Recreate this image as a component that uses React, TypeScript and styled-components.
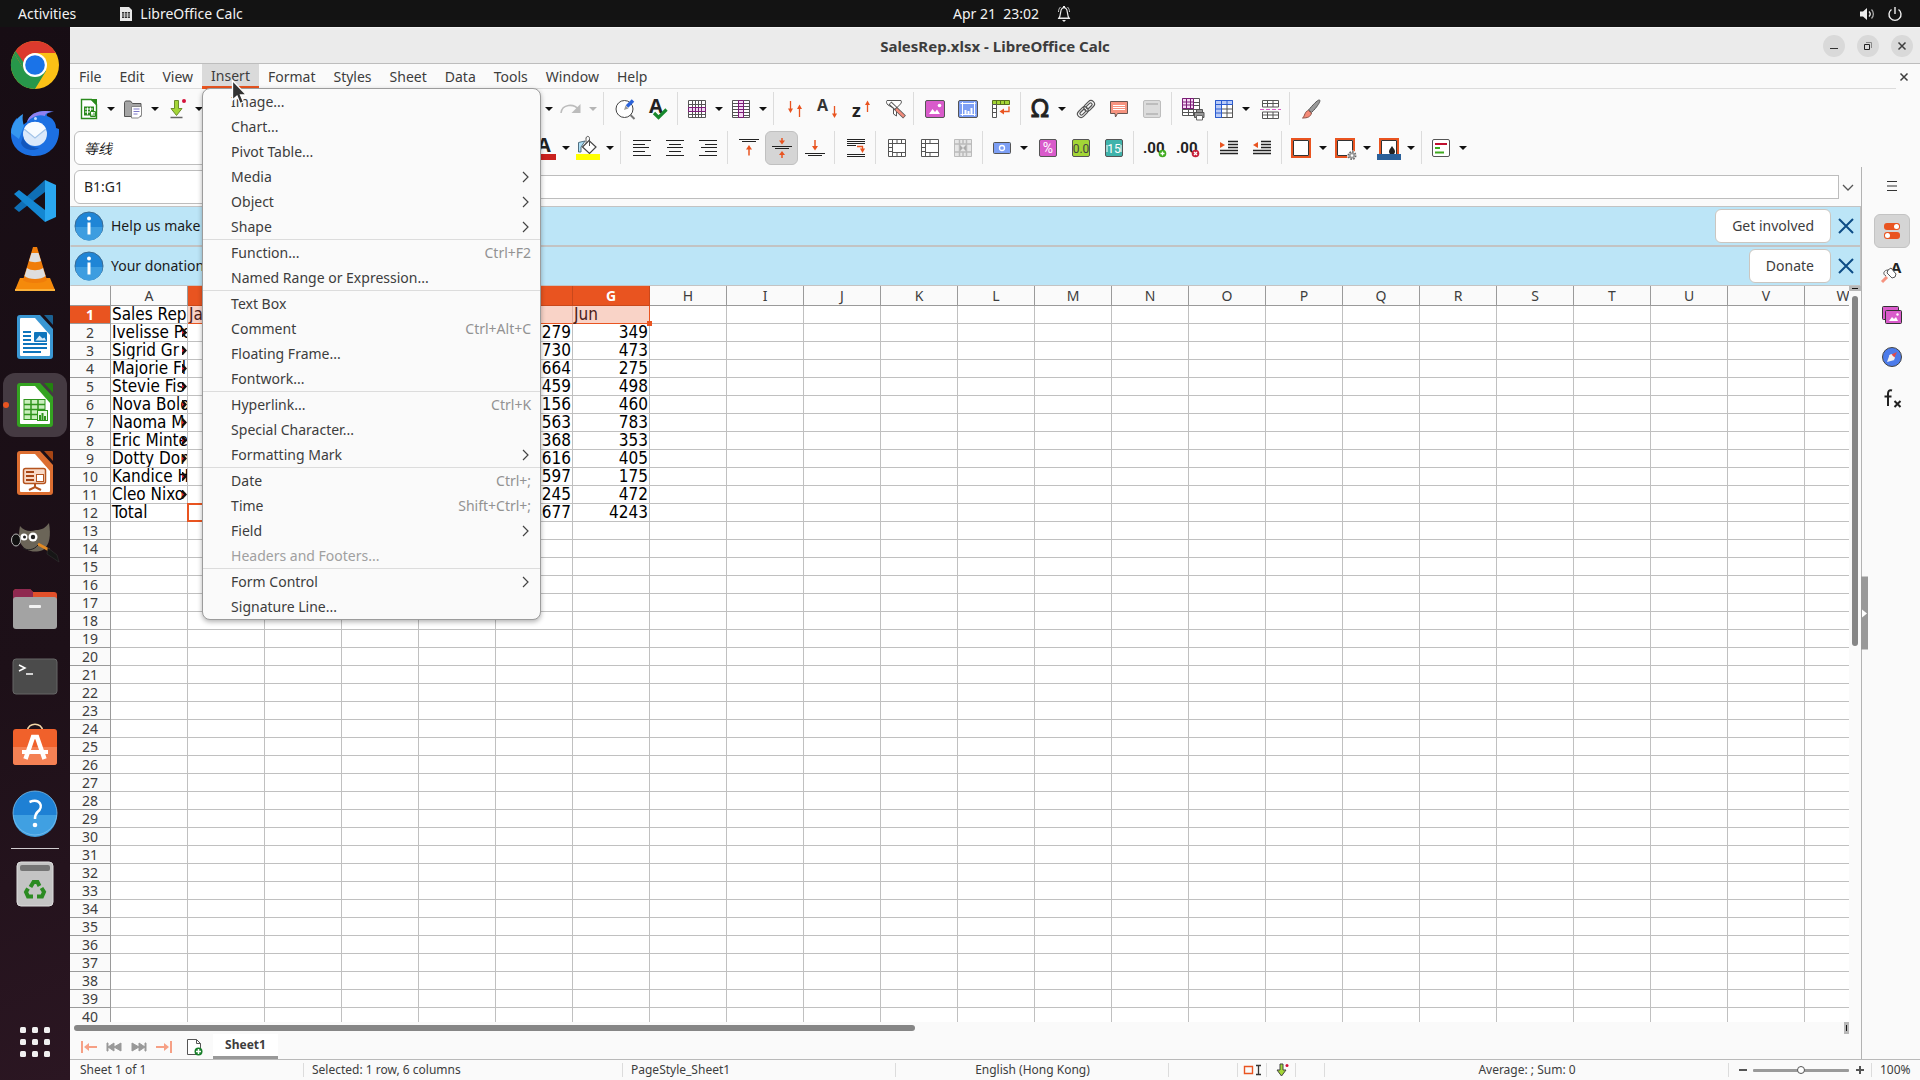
import React from 'react';
import styled, { createGlobalStyle, css } from 'styled-components';

const UI = '"Noto Sans", "Noto Sans CJK SC", sans-serif';
const CELL = '"DejaVu Sans Condensed", "DejaVu Sans", sans-serif';
const C = {
  accent: '#e95420',
  text: '#3d3d3d',
  muted: '#929292',
  bg: '#fafafa',
  line: '#c0c0c0',
  soft: '#dcdcdc',
  head: '#9a9a9a',
};

const Global = createGlobalStyle`
  * { box-sizing: border-box; }
  body { margin: 0; font: 14px/20px ${UI}; color: ${C.text}; background: ${C.bg}; overflow: hidden; }
  button, input { font: inherit; color: inherit; padding: 0; margin: 0; border: 0; background: none; }
`;

/* ---------- shell ---------- */
const Page = styled.div`display: flex; flex-direction: column; height: 100vh;`;
const Body = styled.div`display: flex; flex: 1; min-height: 0;`;
const Win = styled.main`display: flex; flex-direction: column; flex: 1; min-width: 0; background: ${C.bg};`;

const TopBar = styled.header`
  display: flex; align-items: center; height: 27px; flex: none;
  background: #131313; color: #f2f2f2; line-height: 27px;
`;
const TopLeft = styled.div`display: flex; flex: 1 1 0; align-items: center; padding: 0 18px; gap: 43px;`;
const TopRight = styled.div`display: flex; flex: 1 1 0; align-items: center; padding: 0 17px; gap: 12px;`;
const TopApp = styled.button`display: flex; align-items: center; gap: 7px;`;
const Clock = styled.time`margin-left: 70px; white-space: pre;`;
const Push = styled.span`flex: 1;`;

const Dock = styled.nav`
  display: flex; flex-direction: column; align-items: center; gap: 4px; flex: none;
  width: 70px; padding: 6px 0; background: linear-gradient(160deg, #170d14 0%, #1d1018 60%, #2b1622 100%);
`;
const DockItem = styled.button<{ $active?: boolean }>`
  position: relative; display: grid; place-items: center; width: 64px; height: 64px; flex: none; border-radius: 12px;
  background: ${p => (p.$active ? '#453a42' : 'transparent')};
  ${p => p.$active && css`&::before { content: ''; position: absolute; left: 0; top: 29px; width: 6px; height: 6px; border-radius: 50%; background: ${C.accent}; }`}
`;
const DockLine = styled.hr`width: 48px; height: 1px; margin: -1px 0; border: 0; flex: none; background: #d0cccf;`;

const TitleBar = styled.div`
  display: grid; grid-template-columns: 1fr auto 1fr; align-items: center; height: 37px; flex: none;
  background: #ebebeb; border-bottom: 1px solid #bdbdbd; border-top: 1px solid #f6f6f6;
`;
const Title = styled.h1`grid-column: 2; margin: 0; font-size: 15px; line-height: 20px; font-weight: 700;`;
const WinButtons = styled.div`display: flex; justify-content: flex-end; gap: 12px; padding-right: 7px;`;
const WinButton = styled.button`display: grid; place-items: center; width: 22px; height: 22px; border-radius: 50%; background: #d9d9d9;`;

const MenuRow = styled.div`display: flex; flex: none; height: 25px;`;
const MenuBar = styled.nav`display: flex; flex: 1; border-bottom: 1px solid ${C.soft};`;
const MenuHolder = styled.div`position: relative; display: flex;`;
const MenuTitle = styled.button<{ $open?: boolean }>`
  height: 25px; padding: 0 9px; line-height: 24px;
  ${p => p.$open && css`background: #dadada; border-bottom: 3px solid ${C.accent};`}
`;
const DocClose = styled.button`display: grid; place-items: center; width: 24px; padding-right: 8px;`;

const Menu = styled.ul`
  position: absolute; z-index: 5; left: 0; top: 24px; width: 339px; margin: 0; padding: 0; list-style: none;
  background: ${C.bg}; border: 1px solid #9c9c9c; border-radius: 8px; box-shadow: 0 2px 5px rgba(0, 0, 0, 0.3);
`;
const MenuLine = styled.li`height: 1px; background: ${C.soft};`;
const MenuItem = styled.button`
  display: flex; align-items: center; justify-content: space-between; width: 100%; height: 25px; padding: 0 9px 0 28px;
  &:disabled { color: #a0a0a0; }
`;
const Keys = styled.span`color: ${C.muted};`;
const Pointer = styled.svg`position: absolute; z-index: 6; left: 29px; top: 15px; width: 18px; height: 27px;`;

/* ---------- tool bars ---------- */
const ToolBar = styled.div`display: flex; align-items: center; height: 39px; flex: none; padding-left: 4px;`;
const Gap = styled.span<{ $w: number }>`flex: none; width: ${p => p.$w}px;`;
const Divider = styled.span`flex: none; width: 1px; height: 33px; margin: 0 4px 0 3px; background: ${C.soft};`;
const Tool = styled.button<{ $split?: boolean; $on?: boolean }>`
  display: grid; place-items: center; flex: none; height: 34px; width: ${p => (p.$split ? 30 : 33)}px;
  ${p => p.$on && css`background: #d5d5d5; border: 1px solid #c0c0c0; border-radius: 6px;`}
`;
const DropButton = styled.button<{ $off?: boolean }>`
  display: grid; place-items: center; flex: none; width: 14px; height: 34px;
  &::after { content: ''; border: solid transparent; border-width: 4px 4px 0; border-top-color: ${p => (p.$off ? '#b5b5b5' : '#111')}; }
`;
const Glyph = styled.svg<{ $s?: number }>`display: block; overflow: visible; width: ${p => p.$s ?? 24}px; height: ${p => p.$s ?? 24}px;`;
const Field = styled.input<{ $italic?: boolean }>`
  width: 180px; height: 34px; padding: 0 9px; border: 1px solid #bdbdbd; border-radius: 6px; background: #fff; color: #1f1f1f; font-size: 14px;
  font-style: ${p => (p.$italic ? 'italic' : 'normal')};
`;

/* ---------- work area ---------- */
const Work = styled.div`display: flex; flex: 1; min-height: 0;`;
const Main = styled.section`display: flex; flex-direction: column; flex: 1; min-width: 0;`;
const FormulaRow = styled.div`display: flex; align-items: center; height: 39px; flex: none; padding-left: 4px;`;
const Formula = styled.input`flex: 1; min-width: 0; height: 24px; margin-left: 120px; border: 1px solid #bdbdbd; background: #fff;`;
const Expand = styled.button`display: grid; place-items: center; width: 22px; padding-right: 4px;`;

const InfoBar = styled.div`
  display: flex; align-items: center; height: 40px; flex: none; padding: 0 6px 0 3px; color: #1a1a1a;
  background: #bce5f7; border: 1px solid #c3c3c3; border-left-color: #bce5f7;
`;
const InfoText = styled.p`flex: 1; margin: 0 0 0 7px;`;
const InfoButton = styled.button`height: 34px; padding: 0 16px; border: 1px solid #cbc6c0; border-radius: 6px; background: #fff; color: ${C.text};`;
const InfoClose = styled.button`display: grid; place-items: center; width: 16px; margin: 0 0 0 7px;`;

const SheetArea = styled.div`display: flex; flex: 1; min-height: 0;`;
const Clip = styled.div`flex: 1; min-width: 0; overflow: hidden; background: #fff;`;
const Sheet = styled.table`
  table-layout: fixed; border-collapse: separate; border-spacing: 0; width: 1812px;
  td, th { padding: 0; height: 18px; line-height: 17px; overflow: hidden; white-space: nowrap; }
`;
const ColHead = styled.th<{ $on?: boolean }>`
  && { height: 20px; line-height: 19px; }
  font-size: 14px; font-weight: ${p => (p.$on ? 700 : 400)}; color: ${p => (p.$on ? '#fff' : C.text)};
  background: ${p => (p.$on ? C.accent : C.bg)};
  border-right: 1px solid ${p => (p.$on ? '#c9481b' : C.head)}; border-bottom: 1px solid ${p => (p.$on ? '#c9481b' : C.head)};
`;
const RowHead = styled.th<{ $on?: boolean }>`
  font-size: 14px; font-weight: ${p => (p.$on ? 700 : 400)}; color: ${p => (p.$on ? '#fff' : C.text)};
  background: ${p => (p.$on ? C.accent : C.bg)};
  border-right: 1px solid ${C.head}; border-bottom: 1px solid ${C.head};
`;
const Cell = styled.td<{ $num?: boolean; $sel?: boolean; $last?: boolean }>`
  position: relative; font: 17px/17px ${CELL}; color: #000;
  text-align: ${p => (p.$num ? 'right' : 'left')};
  && { padding: 0 1px; }
  border-right: 1px solid ${C.line}; border-bottom: 1px solid ${C.line};
  ${p => p.$sel && css`background: #f9d3c7; color: #4a2018; border-bottom-color: ${C.accent}; border-right-color: #dfb4a7;`}
  ${p => p.$last && css`
    && { overflow: visible; border-right-color: ${C.accent}; }
    &::after { content: ''; position: absolute; z-index: 1; right: -3px; bottom: -3px; width: 5px; height: 5px; background: ${C.accent}; }
  `}
`;
const Marked = styled(Cell)`
  && { overflow: visible; }
  &::before { content: ''; position: absolute; inset: -1px; border: 2px solid ${C.accent}; }
`;
const More = styled.svg`position: absolute; right: 0; top: 4px; width: 5px; height: 9px;`;

const VTrack = styled.div`display: flex; flex-direction: column; align-items: center; width: 12px; flex: none;`;
const VSplit = styled.div`
  display: grid; place-items: center; width: 12px; height: 5px; background: #b8b8b8;
  &::after { content: ''; width: 6px; height: 1px; background: #111; }
`;
const VThumb = styled.div`width: 6px; height: 47.5%; margin-top: 5px; border-radius: 3px; background: #868686;`;
const HTrack = styled.div`display: flex; align-items: center; height: 12px; flex: none; padding: 0 12px 0 4px; justify-content: space-between;`;
const HThumb = styled.div`width: 47.4%; height: 6px; margin-bottom: 1px; border-radius: 3px; background: #868686;`;
const HSplit = styled.div`
  display: grid; place-items: center; width: 5px; height: 12px; background: #b8b8b8;
  &::after { content: ''; width: 1px; height: 6px; background: #111; }
`;
const TabRow = styled.div`display: flex; height: 25px; flex: none; align-items: center; padding-left: 6px;`;
const TabNav = styled.button`display: grid; place-items: center; width: 25px; height: 25px;`;
const NewSheet = styled.button`display: grid; place-items: center; width: 36px; height: 25px; margin: 0 1px 0 0;`;
const SheetTab = styled.button`height: 25px; width: 65px; background: #fff; border-bottom: 3px solid #999; font-weight: 700; font-size: 12px; line-height: 22px;`;

const SideBar = styled.aside`
  position: relative; display: flex; flex-direction: column; align-items: center; gap: 8px; width: 59px; flex: none;
  padding: 2px 0 0 1px; border-left: 1px solid #b3b3b3;
`;
const SideButton = styled.button<{ $on?: boolean; $first?: boolean }>`
  display: grid; place-items: center; width: 36px; height: 34px; border-radius: 6px; margin-bottom: ${p => (p.$first ? 3 : 0)}px;
  border: 1px solid ${p => (p.$on ? '#c3c3c3' : 'transparent')}; background: ${p => (p.$on ? '#d5d5d5' : 'transparent')};
`;
const SideHandle = styled.button`
  position: absolute; left: -1px; top: 50%; width: 7px; height: 73px; transform: translateY(-50%); background: #999;
  &::after { content: ''; display: block; width: 0; border: solid transparent; border-width: 4px 0 4px 5px; border-left-color: #fff; margin-left: 1px; }
`;

const StatusBar = styled.footer`
  display: flex; align-items: stretch; height: 21px; flex: none; border-top: 1px solid #b9b9b9; font-size: 12px; line-height: 20px;
`;
const Stat = styled.div<{ $w?: number; $center?: boolean }>`
  display: flex; align-items: center; padding: 0 8px; overflow: hidden; white-space: nowrap;
  justify-content: ${p => (p.$center ? 'center' : 'flex-start')};
  flex: ${p => (p.$w ? `0 1 ${p.$w}px` : '1 1 0')};
  background: linear-gradient(${C.soft}, ${C.soft}) right center / 1px 14px no-repeat;
  &:first-child { padding-left: 10px; }
`;
const IconStat = styled(Stat)`justify-content: center; padding: 0;`;
const Zoom = styled.div`display: flex; align-items: center; gap: 6px; width: 143px; padding: 0 8px 0 9px; flex: none; background: linear-gradient(${C.soft}, ${C.soft}) right center / 1px 14px no-repeat;`;
const ZoomButton = styled.button`display: grid; place-items: center; width: 9px; height: 20px; flex: none;`;
const Slider = styled.input`
  flex: 1; min-width: 0; height: 20px; appearance: none;
  &::-webkit-slider-runnable-track { height: 3px; background: #9a9a9a; border-radius: 1px; }
  &::-webkit-slider-thumb { appearance: none; width: 8px; height: 8px; margin-top: -3px; border: 1px solid #555; border-radius: 50%; background: #fff; }
`;
const Percent = styled.div`width: 48px; padding-left: 8px; flex: none;`;

/* ---------- drawings ---------- */
const G = '#555';
const gridPath = 'M3.5 3.5h17v17h-17z';
const lines = (pts: string, c = '#222', w = 1) => <path d={pts} stroke={c} strokeWidth={w} fill="none" />;
const framed = (extra?: React.ReactNode) => (
  <><path d="M3 3h18v18H3z" fill="#fff" stroke={C.accent} strokeWidth="2" /><path d="M4.500 4.500h15v15h-15z" fill="none" stroke="#333" />{extra}</>
);

const icons: Record<string, React.ReactNode> = {
  fresh: (<><path d="M4.500 2.500h10l5 5v14h-15z" fill="#fff" stroke="#2b8a1d" strokeWidth="1.400" /><path d="M13 2h7v7z" fill="#2b8a1d" /><path d="M7 9.500h10v9H7z" fill="#2b8a1d" />{lines('M8 12h8M8 15h8M10.500 10.500v7M13.500 10.500v7', '#fff')}<path d="M13.500 14.500h5v5h-5z" fill="#fff" stroke="#2b8a1d" />{lines('M15 19.500v-2M17 19.500v-4', '#2b8a1d')}</>),
  open: (<><path d="M3.500 19.500v-14l1-1.500h5l2 2.500h8.500v13z" fill="#a5a5a5" stroke="#555" /><path d="M10.500 9.500h10v8.500l-3 3h-7z" fill="#fff" stroke="#888" />{lines('M12.500 12h6M12.500 14.500h6M12.500 17h4', '#7d79c8')}</>),
  save: (<><path d="M9.500 3.500h4v8h3.500l-5.500 7-5.500-7h3.500z" fill="#a3d636" stroke="#6c8d2b" />{lines('M5.500 20.500h12', '#666', 1.5)}<circle cx="19" cy="4" r="2" fill="#d4113a" /></>),
  redo: (<>{lines('M2 16c1-9 13-10 18-3', '#bcbcbc', 1.5)}<path d="M21.500 7v9h-9z" fill="#bcbcbc" /></>),
  find: (<><circle cx="11.500" cy="12" r="8.500" fill="#fff" stroke="#444" />{lines('M17.500 18l4 4', '#777', 2)}{lines('M20 3.500l-6 6', '#2a62d8', 3.5)}<path d="M11 13l1.500-4.500 3 3z" fill="#999" /></>),
  spell: (<><text x="3" y="16" fontFamily="Open Sans" fontSize="20" fontWeight="700" fill="#222">A</text>{lines('M8 16l4.500 4.500 8-8', '#17882d', 3.2)}</>),
  row: (<><path d={gridPath} fill="#fff" stroke={G} />{lines('M3.500 7.500h17M3.500 17.500h17M7.500 3.500v17M10.500 3.500v17M13.500 3.500v17M16.500 3.500v17', G)}<path d="M3.500 10.500h17v4h-17z" fill="#eedaf0" stroke="#7b1c76" />{lines('M7.500 10.500v4M10.500 10.500v4M13.500 10.500v4M16.500 10.500v4', '#7b1c76')}</>),
  col: (<><path d={gridPath} fill="#fff" stroke={G} />{lines('M3.500 6.500h17M3.500 9.500h17M3.500 12.500h17M3.500 15.500h17M3.500 18.500h17', G)}<path d="M9.500 3.500h5v17h-5z" fill="#f5d8f3" stroke="#7b1c76" />{lines('M9.500 6.500h5M9.500 9.500h5M9.500 12.500h5M9.500 15.500h5', '#7b1c76')}</>),
  sort: (<>{lines('M7.500 4v8M16.500 11v9', C.accent, 1.3)}<path d="M5 11.500h5l-2.500 4.500zM14 12h5l-2.500-4.500z" fill={C.accent} /></>),
  asc: (<><text x="1" y="14" fontFamily="Open Sans" fontSize="16" fontWeight="700" fill="#333">A</text>{lines('M18.500 9v8', C.accent, 1.3)}<path d="M16 16.500h5l-2.500 4.500z" fill={C.accent} /></>),
  desc: (<><text x="3" y="20" fontFamily="Open Sans" fontSize="18" fontWeight="700" fill="#222">z</text>{lines('M18.500 8v7', C.accent, 1.3)}<path d="M16 8h5l-2.500-4.500z" fill={C.accent} /></>),
  filter: (<><path d="M5 3.500h14c1 2 0 3-1.500 4.500L14.500 11v8l-3-2v-6L6 8C4.500 6.500 4 5 5 3.500z" fill="#fff" stroke="#555" />{lines('M8 6l14.500 14', '#555', 4)}{lines('M14 12l8 7.500', '#f28b7b', 2.5)}{lines('M8.500 6.500l5 4.500', '#fff', 2)}</>),
  image: (<><rect x="2.500" y="3.500" width="19" height="17" rx="1.500" fill="#d95bcb" stroke="#555" /><path d="M6 17l3.500-5 2.500 3 2-2.500 3 4.500z" fill="#fff" /><circle cx="16.500" cy="8.500" r="1.800" fill="#fff" /></>),
  chart: (<><rect x="2.500" y="3.500" width="19" height="17" rx="1.500" fill="#7d9ff5" stroke="#555" />{lines('M6.500 5v14M4.500 17.500h15M4.500 6.500h15M18.500 5v14', '#fff')}{lines('M9.500 17v-4M12.500 17v-3M15.500 17v-6', '#fff', 2)}</>),
  pivot: (<><path d="M3.500 3.500h17v4h-17z" fill="#a3d636" stroke="#58701e" />{lines('M7.500 3.500v4M11.500 3.500v4M15.500 3.500v4', '#58701e')}<path d="M3.500 7.500h4v13h-4z" fill="#fff" stroke={G} />{lines('M3.500 11.500h4M3.500 15.500h4', G)}{lines('M20 9.500v5h-6', C.accent, 1.3)}<path d="M10.500 14.500l4.500-3v6z" fill={C.accent} /></>),
  omega: (<text x="12" y="20" textAnchor="middle" fontFamily="DejaVu Sans" fontSize="24" fill="#222" stroke="#222" strokeWidth=".8">Ω</text>),
  link: (<g transform="rotate(-45 12 12)" fill="none" stroke="#555" strokeWidth="1.200"><rect x="1.500" y="8.500" width="12" height="7" rx="3.500" /><rect x="4" y="10.500" width="7" height="3" rx="1.500" /><rect x="10.500" y="8.500" width="12" height="7" rx="3.500" /><rect x="13" y="10.500" width="7" height="3" rx="1.500" /></g>),
  comment: (<><path d="M3.500 4.500h17v12h-10l-2 3.500-.5-3.500H3.500z" fill="#f6937f" stroke="#6b5550" />{lines('M6 8.500h12M6 10.500h12M6 12.500h12', '#fff')}</>),
  header: (<><rect x="3.500" y="3.500" width="17" height="17" rx="1.500" fill="#dcdcdc" stroke="#bdbdbd" />{lines('M6 7h12M6 17h12', '#bdbdbd', 2)}</>),
  print: (<><path d="M1.500 1.500h17v17h-17z" fill="#fff" stroke={G} />{lines('M1.500 5.500h17M1.500 8.500h17M1.500 12.500h17M1.500 15.500h17M7.500 1.500v17M12.500 1.500v17', G)}<path d="M1.500 1.500h11v10h-11z" fill="#f5d8f3" stroke="#7b1c76" />{lines('M1.500 5h11M1.500 8h11M5.500 1.500v10M9.500 1.500v10', '#7b1c76')}<path d="M13.500 15.500h9.500v5h-9.500zM15.500 12.500h6v3h-6z" fill="#9a9a9a" stroke="#555" /><path d="M15.500 18.500h6v4.500h-6z" fill="#fff" stroke="#666" /></>),
  freeze: (<><path d={gridPath} fill="#fff" stroke={G} /><path d="M3.500 3.500h17v4h-11v13h-6z" fill="#b9cbf7" />{lines('M15 7.500v13M9.500 12h11M9.500 16h11M20.500 7.500v13h-11', G)}{lines('M9.500 20.500h-6v-17h17v4h-17M9.500 3.500v17M15 3.500v4M3.500 12h6M3.500 16h6', '#2a5bd0')}</>),
  split: (<><path d="M4.500 3.500h16v6.500h-16zM4.500 15h16v6.500h-16z" fill="#fff" stroke={G} />{lines('M4.500 6.500h16M4.500 18h16M9.500 3.500v6.500M15 3.500v6.500M9.500 15v6.500M15 15v6.500', G)}<path d="M2 12.500h21" stroke="#d95bcb" strokeDasharray="4 2" /></>),
  brush: (<><path d="M20.500 3c2 1-4 9-8 12.500l-3-2.500C13 9 18.500 2.500 20.500 3z" fill="#999" stroke="#555" /><path d="M9.500 13.500l3 2.500c-1 4-4 5-9 5 2.500-1.500 2-7 6-7.500z" fill="#f58a77" stroke="#8a5348" /></>),
  fontColor: (<><text x="5" y="16" fontFamily="Open Sans" fontSize="20" fontWeight="700" fill="#222">A</text><path d="M0 18h24v6H0z" fill="#c9211e" /></>),
  fill: (<><path d="M2.500 16V6.500L9 5l-4 6v5z" fill="#aee0f7" stroke="#4f6e80" /><path d="M6.500 11L13 4.500l7 6.500-6.500 6.500z" fill="#fff" stroke="#444" strokeWidth="1.200" />{lines('M13.500 10V2.500c0-3-4-3-3.500 1v3', '#555')}<path d="M0 18h24v6H0z" fill="#ff0" /></>),
  left: lines('M3 4.500h18M3 8.500h12M3 11.500h16M3 15.500h12M3 19.500h18'),
  center: lines('M3 4.500h18M6 8.500h12M4 11.500h16M6 15.500h12M3 19.500h18'),
  right: lines('M3 4.500h18M9 8.500h12M5 11.500h16M9 15.500h12M3 19.500h18'),
  top: (<>{lines('M2 3.500h20M5 5.500h14')}{lines('M12 12v7.500', C.accent, 1.5)}<path d="M9 13.500h6l-3-4.500z" fill={C.accent} /></>),
  middle: (<>{lines('M2 10.500h20M5 12.500h14')}{lines('M12 2v3M12 18v4', C.accent, 1.5)}<path d="M9 4.500h6l-3 4zM9 19h6l-3-4z" fill={C.accent} /></>),
  bottom: (<>{lines('M2 17.500h20M5 19.500h14')}{lines('M12 4v7', C.accent, 1.5)}<path d="M9 10h6l-3 4.500z" fill={C.accent} /></>),
  wrap: (<>{lines('M3 3.500h18M3 5.500h18M3 7.500h18M3 9.500h9M3 18.500h18M3 20.500h18')}{lines('M13 10.500h5.500v3', C.accent, 1.3)}<path d="M16 12.500h5l-2.500 4.500z" fill={C.accent} /></>),
  merge: (<><path d={gridPath} fill="#fff" stroke={G} />{lines('M3.500 7.500h17M7.500 3.500v17M12 3.500v4M16.500 3.500v4M3.500 11.500h4M3.500 15.500h4M12 16.500v4M7.500 16.500h13M16.500 16.500v4', G)}</>),
  mergeTwo: (<><path d={gridPath} fill="#fff" stroke={G} />{lines('M3.500 7.500h17M7.500 3.500v17M12 3.500v4M3.500 11.500h4M3.500 15.500h4M12 16.500v4M7.500 16.500h13', G)}</>),
  unmerge: (<><path d={gridPath} fill="#e6e6e6" stroke="#bbb" />{lines('M3.500 8h17M3.500 16h17M8.500 3.500v17M15.500 3.500v17M12 3.500v4M12 16v4', '#bbb', 1.5)}<path d="M9 9l3 3 3-3v6l-3-3-3 3z" fill="#aaa" /></>),
  money: (<><rect x="3.500" y="6.500" width="17" height="11" rx="1" fill="#7d9ff5" stroke="#555" /><circle cx="12" cy="12" r="2.500" fill="none" stroke="#fff" strokeWidth="1.300" /></>),
  percent: (<><rect x="3.500" y="3.500" width="17" height="17" rx="1.500" fill="#d95bcb" stroke="#555" /><text x="12" y="17" textAnchor="middle" fontFamily="Roboto" fontSize="14" fill="#fff">%</text></>),
  number: (<><rect x="3.500" y="3.500" width="17" height="17" rx="1.500" fill="#a3d636" stroke="#555" /><text x="12" y="16.500" textAnchor="middle" fontFamily="Roboto" fontSize="12" fill="#444">0.0</text></>),
  date: (<><rect x="3.500" y="3.500" width="17" height="17" rx="1.500" fill="#3fb3ab" stroke="#555" /><text x="12" y="16.500" textAnchor="middle" fontFamily="Roboto" fontSize="12" fill="#fff">15</text>{lines('M5 9v7M19 9v7', '#fff')}</>),
  addDec: (<><text x="0" y="17" fontFamily="Roboto" fontSize="15" fontWeight="700" fill="#222">.00</text><circle cx="19.500" cy="17.500" r="3.800" fill="#3faa1e" />{lines('M17.500 17.500h4M19.500 15.500v4', '#fff', 1.3)}</>),
  delDec: (<><text x="0" y="17" fontFamily="Roboto" fontSize="15" fontWeight="700" fill="#222">.00</text><circle cx="19.500" cy="17.500" r="3.800" fill="#c6203a" />{lines('M18 16l3 3M21 16l-3 3', '#fff', 1.3)}</>),
  indent: (<>{lines('M11 5.500h10M11 8.500h10M11 11.500h10M3 14.500h18M3 17.500h18', '#222', 1.4)}<path d="M3 6l5 3-5 3z" fill={C.accent} /></>),
  outdent: (<>{lines('M11 5.500h10M11 8.500h10M11 11.500h10M3 14.500h18M3 17.500h18', '#222', 1.4)}<path d="M8 6L3 9l5 3z" fill={C.accent} /></>),
  border: framed(),
  borderStyle: framed(<><circle cx="19" cy="19.500" r="5" fill="#fafafa" /><circle cx="19" cy="19.500" r="3.500" fill="none" stroke="#666" strokeWidth="2" strokeDasharray="1.600 1.100" /><circle cx="19" cy="19.500" r="2.200" fill="#fff" stroke="#999" strokeWidth="1.800" /></>),
  borderColor: framed(<><path d="M15 10c2 3 3 4 3 5.500a3 3 0 0 1-6 0c0-1.500 1-2.500 3-5.500z" fill="#222" /><path d="M0 18h24v6H0z" fill="#2a6099" /></>),
  cond: (<><rect x="3.500" y="3.500" width="17" height="17" rx="1.500" fill="#fff" stroke="#555" />{lines('M6 8h12', '#c01030', 2)}{lines('M6 12h5M6 16.500h9', '#3faa1e', 2)}</>),
};

const Icon = ({ name }: { name: string }) => <Glyph viewBox="0 0 24 24" aria-hidden="true">{icons[name]}</Glyph>;

const officeDoc = (main: string, dark: string, inner: React.ReactNode) => (
  <><path d="M9 2h20l13 14v27a3 3 0 0 1-3 3H9a3 3 0 0 1-3-3V5a3 3 0 0 1 3-3z" fill={main} /><path d="M10 5h14l15 17v20a1 1 0 0 1-1 1H10a1 1 0 0 1-1-1V6a1 1 0 0 1 1-1z" fill="#fff" /><path d="M33 2h8a1 1 0 0 1 1 1v9z" fill={dark} />{inner}</>
);

const dock: { label: string; art: React.ReactNode; active?: boolean }[] = [
  { label: 'Chrome', art: <><circle cx="24" cy="24" r="24" fill="#fbc116" /><path d="M3.200 12A24 24 0 0 0 24 48l11-18L24 24 14 30z" fill="#27974a" /><path d="M3.200 12A24 24 0 0 1 44.800 12H24a12 12 0 0 0-10.500 17z" fill="#dc3a2d" /><path d="M3.200 12L14 30l2-4L4.500 10z" fill="#27974a" /><circle cx="24" cy="24" r="12" fill="#fff" /><circle cx="24" cy="24" r="9.800" fill="#1a73e8" /></> },
  { label: 'Thunderbird', art: <><path d="M16 13c3-9 13-13 27-10-6 0-8 2-7 4 6 2 9 7 9 12l3 1c1 15-9 27-24 27C10 47 0 38 0 25c0-7 2-12 6-16l1 6 4-4 1 5z" fill="#1c70e2" /><path d="M0 24C0 17 5 9 12 5c-1 5 0 9 1 12l-5 13z" fill="#3597f0" /><path d="M16 13c3-9 13-13 27-10-7 0-9 2-9 4-6-2-12 0-18 6z" fill="#8f80f0" /><circle cx="24" cy="25" r="12" fill="#dbe9fa" /><path d="M13 20l11 9 11-9a12 12 0 0 0-22 0z" fill="#f7fbff" /><path d="M13 20l11 9 11-9" fill="none" stroke="#a3c4e8" strokeWidth="1.200" /><path d="M12 27c1 7 8 12 16 12-5 4-16 2-18-5z" fill="#1257bd" /><circle cx="24.500" cy="9.500" r="1.500" fill="#bfe0ff" /></> },
  { label: 'Code', art: <><path d="M3 31l5 4 26-20V3z" fill="#0f6fb5" /><path d="M3 17l5-4 26 20v12z" fill="#1487d2" /><path d="M34 3l11 5v32l-11 5z" fill="#2aa7f0" /></> },
  { label: 'VLC', art: <><path d="M9 33h30l5 12H4z" fill="#f58a0b" /><path d="M4 44h40v2H4z" fill="#fbb13a" /><path d="M22 2h4l10 33c-3 4-21 4-24 0z" fill="#f07d0a" /><path d="M20.500 8h7l2.500 8c-2 1.500-10 1.500-12 0zM16 23c4 3 12 3 16 0l2.500 8c-4 4-17 4-21 0z" fill="#dedede" /></> },
  { label: 'Writer', art: officeDoc('#3a97d3', '#1b6192', <>{lines('M12 19h8M12 23h8M12 27h8M12 31h24M12 35h24M12 39h18', '#0f75bc', 2)}<rect x="23" y="19" width="13" height="10" rx="1" fill="#0f75bc" /><path d="M24.500 27.500l4-5 3 3 2-1 1.500 3z" fill="#d4e9f7" /></>) },
  { label: 'Calc', active: true, art: officeDoc('#34a321', '#22820f', <><rect x="13" y="18.500" width="21" height="20" fill="#c9efbd" stroke="#2f951c" />{lines('M13 23.500h21M13 28.500h21M13 33.500h21M20 18.500v20M27 18.500v20', '#2f951c', 1.5)}<rect x="26.500" y="29.500" width="10" height="10" fill="#e8f8e2" stroke="#2f951c" />{lines('M29 39v-5M31.500 39v-7M34 39v-4', '#2f951c', 2)}</>) },
  { label: 'Impress', art: officeDoc('#dc6e31', '#a64514', <><rect x="12.500" y="19.500" width="22" height="15" rx="2" fill="#f8d9c6" stroke="#b5541f" strokeWidth="1.500" />{lines('M15 23h8M15 27h8M15 31h8', '#a64514', 1.8)}<rect x="25.500" y="25.500" width="7" height="7" fill="#fff" stroke="#b5541f" />{lines('M24 35v3M18 41l6-3 6 3', '#b5541f', 2)}</>) },
  { label: 'GIMP', art: <><path d="M9 9c4 5 10 6 16 4 6 0 9-2 13-7 2 12 1 22-6 27-8 3-17 2-22-6-3-5-2-12-1-18z" fill="#6b6558" /><ellipse cx="5" cy="23" rx="4.500" ry="6" fill="#111" stroke="#bbb" /><circle cx="13" cy="20" r="3.500" fill="#fff" /><circle cx="22" cy="20" r="4.500" fill="#fff" /><circle cx="13.500" cy="20" r="1.500" fill="#222" /><circle cx="22" cy="20" r="2.200" fill="#222" />{lines('M27 27l11 6', '#e28a24', 3)}<path d="M37 31l9 7 2 7-12-8z" fill="#161616" stroke="#333" strokeWidth=".6" /><path d="M12 31c5 3 11 2 15-3" stroke="#222" fill="none" /></> },
  { label: 'Files', art: <><path d="M2 8a4 4 0 0 1 4-4h13l3 3h21a3 3 0 0 1 3 3v12H2z" fill="#e2502a" /><path d="M2 8a4 4 0 0 1 4-4h13l3 3v8H2z" fill="#8f2950" /><rect x="2" y="12" width="44" height="32" rx="3" fill="#a3a3a3" /><rect x="18" y="20" width="12" height="3" rx="1" fill="#f2f2f2" /></> },
  { label: 'Terminal', art: <><rect x="2" y="6" width="44" height="35" rx="3" fill="#4b4b4b" stroke="#666" />{lines('M8 12l6 3-6 3', '#fff', 1.5)}{lines('M15 21h7', '#fff', 1.5)}</> },
  { label: 'Software', art: <><path d="M16.500 10c0-9 15-9 15 0" fill="none" stroke="#f3d6a8" strokeWidth="1.500" /><rect x="2" y="8" width="44" height="36" rx="3" fill="#f0612b" /><path d="M2 26h44v15a3 3 0 0 1-3 3H5a3 3 0 0 1-3-3z" fill="#f48154" /><path d="M14.500 38L22 16h4l7.500 22" fill="none" stroke="#fff" strokeWidth="4.500" />{lines('M11 31h26', '#fff', 4)}</> },
  { label: 'Help', art: <><circle cx="24" cy="24" r="22" fill="#1e80d4" /><path d="M2 26a22 22 0 0 0 44 0z" fill="#40a0e2" /><circle cx="24" cy="24" r="22" fill="none" stroke="#7cc0ee" strokeWidth=".8" /><path d="M18.500 13c10-4 15 4 8 10-2 2-2.500 3-2.500 7" fill="none" stroke="#fff" strokeWidth="2.500" /><circle cx="24" cy="36" r="2.300" fill="#fff" /></> },
  { label: 'Trash', art: <><rect x="6" y="2" width="36" height="44" rx="4" fill="#c4c4c4" stroke="#dedede" /><rect x="9" y="5" width="30" height="6" rx="2" fill="#757575" /><g fill="none" stroke="#2c8b22" strokeWidth="4"><path d="M19.500 27l3-5h4l2 4" /><path d="M30.500 28l2.500 4-2 4.500h-5" /><path d="M22 36.500h-5l-2-4.500 2-3.500" /></g></> },
];

const Drop = ({ label, off }: { label: string; off?: boolean }) => <DropButton $off={off} aria-label={`${label} options`} />;

// "|" is a divider, a trailing "+" marks a split button
const renderTools = (list: string[]) =>
  list.map((t, i) => {
    if (t === '|') return <Divider key={i} />;
    const split = t.endsWith('+');
    const name = t.replace('+', '');
    return (
      <React.Fragment key={i}>
        <Tool $split={split} $on={name === 'middle'} aria-label={name}><Icon name={name} /></Tool>
        {split && <Drop label={name} off={name === 'redo'} />}
      </React.Fragment>
    );
  });

const insertMenu: ([string, string?, boolean?] | null)[] = [
  ['Image...'], ['Chart...'], ['Pivot Table...'], ['Media', '>'], ['Object', '>'], ['Shape', '>'], null,
  ['Function...', 'Ctrl+F2'], ['Named Range or Expression...'], null,
  ['Text Box'], ['Comment', 'Ctrl+Alt+C'], ['Floating Frame...'], ['Fontwork...'], null,
  ['Hyperlink...', 'Ctrl+K'], ['Special Character...'], ['Formatting Mark', '>'], null,
  ['Date', 'Ctrl+;'], ['Time', 'Shift+Ctrl+;'], ['Field', '>'], ['Headers and Footers...', '', true], null,
  ['Form Control', '>'], ['Signature Line...'],
];

const names = ['Sales Rep', 'Ivelisse Pe', 'Sigrid Gr', 'Majorie Fl', 'Stevie Fis', 'Nova Bolo', 'Naoma M', 'Eric Minte', 'Dotty Don', 'Kandice H', 'Cleo Nixo', 'Total'];
const may = ['', '279', '730', '664', '459', '156', '563', '368', '616', '597', '245', '4677'];
const jun = ['Jun', '349', '473', '275', '498', '460', '783', '353', '405', '175', '472', '4243'];
const columns = 'ABCDEFGHIJKLMNOPQRSTUVW'.split('');
const rows = Array.from({ length: 40 }, (_, i) => i);

const Cross = ({ size, color = '#3d3d3d', w = 1.5 }: { size: number; color?: string; w?: number }) => (
  <Glyph $s={size} viewBox="0 0 16 16" aria-hidden="true"><path d="M1 1l14 14M15 1L1 15" stroke={color} strokeWidth={(w * 16) / size} fill="none" /></Glyph>
);

const InfoIcon = () => (
  <Glyph $s={30} viewBox="0 0 30 30" aria-hidden="true">
    <circle cx="15" cy="15" r="14" fill="#1f85d6" stroke="#3a6a92" /><path d="M1.500 16a13.500 13.500 0 0 0 27 0z" fill="#3d9de0" />
    <circle cx="15" cy="7.500" r="2" fill="#fff" /><path d="M13.500 11.500h3v12h-3z" fill="#fff" />
  </Glyph>
);

const renderCell = (r: number, c: string) => {
  const sel = r === 0 && c >= 'B' && c <= 'G';
  if (r === 11 && c === 'B') return <Marked key={c} />;
  let v = '';
  if (c === 'A') v = names[r] ?? '';
  if (c === 'B' && r === 0) v = 'Jan';
  if (c === 'F') v = may[r] ?? '';
  if (c === 'G') v = jun[r] ?? '';
  return (
    <Cell key={c} $sel={sel} $last={sel && c === 'G'} $num={r > 0 && c !== 'A'}>
      {v}
      {c === 'A' && r > 0 && r < 11 && <More viewBox="0 0 5 9"><path d="M0 0h1l4 4.500L1 9H0z" fill="#111" /><path d="M0 2.500l2 2-2 2z" fill="#e3202b" /></More>}
    </Cell>
  );
};

export default function App() {
  return (
    <Page>
      <Global />
      <TopBar>
        <TopLeft>
          <button>Activities</button>
          <TopApp>
            <Glyph $s={14} viewBox="0 0 14 14"><path d="M1 0h9l3 3v11H1z" fill="#e8e8e8" /><path d="M3 5h8v6H3z" fill="#333" />{lines('M3 7h8M3 9h8M5.500 5v6M8.500 5v6', '#e8e8e8', 0.7)}</Glyph>
            LibreOffice Calc
          </TopApp>
        </TopLeft>
        <Clock>Apr 21  23:02</Clock>
        <TopRight>
          <Glyph $s={16} viewBox="0 0 16 16"><path d="M3 12c2-2 1-8 3-9.500 1-.8 3-.8 4 0C12 4 11 10 13 12zM2 12.500h12" fill="none" stroke="#eee" strokeWidth="1.200" /><path d="M6 14h4l-2 2zM7 0h2v2H7z" fill="#eee" />{lines('M2.500 6c0-2 .5-3.500 2-5M13.500 6c0-2-.5-3.500-2-5', '#ccc')}</Glyph>
          <Push />
          <Glyph $s={16} viewBox="0 0 16 16"><path d="M1 5.500h3L8 2v12l-4-3.500H1z" fill="#eee" />{lines('M10 5.500c1.500 1.500 1.500 3.500 0 5', '#eee', 1.3)}{lines('M12.500 3.500c2.500 2.500 2.500 6.500 0 9', '#aaa', 1.3)}</Glyph>
          <Glyph $s={16} viewBox="0 0 16 16">{lines('M4.500 3.500a6 6 0 1 0 7 0M8 1v7', '#eee', 1.4)}</Glyph>
        </TopRight>
      </TopBar>
      <Body>
        <Dock aria-label="Dock">
          {dock.map(d => (
            <React.Fragment key={d.label}>
              {d.label === 'Trash' && <DockLine />}
              <DockItem $active={d.active} aria-label={d.label}><Glyph $s={48} viewBox="0 0 48 48">{d.art}</Glyph></DockItem>
            </React.Fragment>
          ))}
          <Push />
          <DockItem aria-label="Show applications">
            <Glyph $s={30} viewBox="0 0 30 30">{[0, 12, 24].map(y => [0, 12, 24].map(x => <rect key={`${x}-${y}`} x={x} y={y} width="6" height="6" rx="1.500" fill="#f0f0f0" />))}</Glyph>
          </DockItem>
        </Dock>
        <Win>
          <TitleBar>
            <Title>SalesRep.xlsx - LibreOffice Calc</Title>
            <WinButtons>
              <WinButton aria-label="Minimize"><Glyph $s={10} viewBox="0 0 10 10">{lines('M1 7.500h8', '#333')}</Glyph></WinButton>
              <WinButton aria-label="Restore"><Glyph $s={10} viewBox="0 0 10 10">{lines('M1.500 3.500h5v5h-5z', '#222')}{lines('M3 1.500h5.500V7', '#888')}</Glyph></WinButton>
              <WinButton aria-label="Close"><Cross size={8} /></WinButton>
            </WinButtons>
          </TitleBar>
          <MenuRow>
            <MenuBar>
              {['File', 'Edit', 'View', 'Insert', 'Format', 'Styles', 'Sheet', 'Data', 'Tools', 'Window', 'Help'].map(m => (
                <MenuHolder key={m}>
                  <MenuTitle $open={m === 'Insert'}>{m}</MenuTitle>
                  {m === 'Insert' && (
                    <>
                      <Menu>
                        {insertMenu.map((it, i) => it === null ? <MenuLine key={i} /> : (
                          <li key={i}>
                            <MenuItem disabled={it[2]}>
                              {it[0]}
                              {it[1] === '>' ? <Glyph $s={12} viewBox="0 0 12 12">{lines('M4 1l5 5-5 5', '#444', 1.2)}</Glyph> : it[1] ? <Keys>{it[1]}</Keys> : null}
                            </MenuItem>
                          </li>
                        ))}
                      </Menu>
                      <Pointer viewBox="0 0 18 27"><path d="M1.500 1.500v19.500l4.500-4 3 7.500 3.500-1.500-3-7h6z" fill="#333" stroke="#fff" strokeWidth="1.300" /></Pointer>
                    </>
                  )}
                </MenuHolder>
              ))}
            </MenuBar>
            <DocClose aria-label="Close document"><Cross size={8} /></DocClose>
          </MenuRow>
          <ToolBar>
            {renderTools(['fresh+', 'open+', 'save+'])}
            <Gap $w={294} />
            <Gap $w={42} />
            <Drop label="Undo" />
            {renderTools(['redo+', '|', 'find', 'spell', '|', 'row+', 'col+', '|', 'sort', 'asc', 'desc', 'filter', '|', 'image', 'chart', 'pivot', '|', 'omega+', 'link', 'comment', 'header', '|', 'print', 'freeze+', 'split', '|', 'brush'])}
          </ToolBar>
          <ToolBar>
            <Field $italic aria-label="Font name" defaultValue="等线" />
            <Gap $w={275} />
            {renderTools(['fontColor+', 'fill+', '|', 'left', 'center', 'right', '|', 'top', 'middle', 'bottom', '|', 'wrap', '|', 'merge', 'mergeTwo', 'unmerge', '|', 'money+', 'percent', 'number', 'date', '|', 'addDec', 'delDec', '|', 'indent', 'outdent', '|', 'border+', 'borderStyle+', 'borderColor+', '|', 'cond+'])}
          </ToolBar>
          <Work>
            <Main>
              <FormulaRow>
                <Field aria-label="Name box" defaultValue="B1:G1" />
                <Formula aria-label="Formula" />
                <Expand aria-label="Expand formula bar"><Glyph $s={12} viewBox="0 0 12 12">{lines('M1 4l5 5 5-5', '#555', 1.3)}</Glyph></Expand>
              </FormulaRow>
              {[['Help us make', 'Get involved'], ['Your donation', 'Donate']].map(([t, b]) => (
                <InfoBar key={b}>
                  <InfoIcon />
                  <InfoText>{t}</InfoText>
                  <InfoButton>{b}</InfoButton>
                  <InfoClose aria-label={`Dismiss ${b}`}><Cross size={16} color="#0d4c86" w={2} /></InfoClose>
                </InfoBar>
              ))}
              <SheetArea>
                <Clip>
                  <Sheet>
                    <colgroup><col width="41" />{columns.map(c => <col key={c} width="77" />)}</colgroup>
                    <thead><tr><ColHead aria-label="Select all" />{columns.map(c => <ColHead key={c} $on={c >= 'B' && c <= 'G'}>{c}</ColHead>)}</tr></thead>
                    <tbody>
                      {rows.map(r => <tr key={r}><RowHead $on={r === 0}>{r + 1}</RowHead>{columns.map(c => renderCell(r, c))}</tr>)}
                    </tbody>
                  </Sheet>
                </Clip>
                <VTrack><VSplit /><VThumb /></VTrack>
              </SheetArea>
              <HTrack><HThumb /><HSplit /></HTrack>
              <TabRow>
                <TabNav aria-label="First sheet"><Glyph $s={16} viewBox="0 0 16 16">{lines('M1 2v12', '#f6a085', 2)}{lines('M5 8h11', '#f6a085', 2)}<path d="M3 8l5-4v8z" fill="#f6a085" /></Glyph></TabNav>
                <TabNav aria-label="Previous sheet"><Glyph $s={16} viewBox="0 0 16 16"><path d="M1 4h1v8H1zM8 4v8L2 8zM15 4v8L8 8z" fill="#999" stroke="#999" /></Glyph></TabNav>
                <TabNav aria-label="Next sheet"><Glyph $s={16} viewBox="0 0 16 16"><path d="M15 4h-1v8h1zM8 4v8l6-4zM1 4v8l7-4z" fill="#999" stroke="#999" /></Glyph></TabNav>
                <TabNav aria-label="Last sheet"><Glyph $s={16} viewBox="0 0 16 16">{lines('M15 2v12', '#f6a085', 2)}{lines('M0 8h11', '#f6a085', 2)}<path d="M13 8L8 4v8z" fill="#f6a085" /></Glyph></TabNav>
                <NewSheet aria-label="Add sheet"><Glyph $s={16} viewBox="0 0 16 16"><path d="M1.500.5h9l4 4v11h-13z" fill="#fff" stroke="#555" />{lines('M10.500.5v4h4', '#555')}<circle cx="12.500" cy="12.500" r="4" fill="#18802a" />{lines('M10 12.500h5M12.500 10v5', '#fff', 1.5)}</Glyph></NewSheet>
                <SheetTab>Sheet1</SheetTab>
              </TabRow>
            </Main>
            <SideBar>
              <SideButton $first aria-label="Sidebar settings"><Glyph $s={12} viewBox="0 0 12 12">{lines('M1 1.500h10M1 6h10M1 10.500h10', '#333', 1.2)}</Glyph></SideButton>
              <SideButton $on aria-label="Properties"><Glyph $s={18} viewBox="0 0 18 18"><rect x="1" y="1" width="16" height="7" rx="3" fill={C.accent} /><circle cx="13.500" cy="4.500" r="2.500" fill="#fff" /><rect x="1" y="10" width="16" height="7" rx="3" fill={C.accent} /><circle cx="4.500" cy="13.500" r="2.500" fill="#fff" /></Glyph></SideButton>
              <SideButton aria-label="Styles"><Glyph viewBox="0 0 24 24"><text x="11" y="12" fontFamily="Open Sans" fontWeight="700" fontSize="15" fill="#222">A</text>{lines('M2 21l5-5', '#f6937f', 3)}<path d="M8 9l3-2 5 6-1 3-3 1-5-5z" fill="#fff" stroke="#555" />{lines('M8 9c-4 0-6 4-2 6', '#555')}</Glyph></SideButton>
              <SideButton aria-label="Gallery"><Glyph viewBox="0 0 24 24"><rect x="2.500" y="3.500" width="16" height="13" rx="1" fill="#d95bcb" stroke="#333" /><rect x="5.500" y="7.500" width="16" height="13" rx="1" fill="#d95bcb" stroke="#333" /><path d="M9 18l3-4 2 2 2-2 2 4z" fill="#fff" /><circle cx="17.500" cy="11.500" r="1.200" fill="#fff" /></Glyph></SideButton>
              <SideButton aria-label="Navigator"><Glyph viewBox="0 0 24 24"><circle cx="12" cy="12" r="9.500" fill="#4c7bea" stroke="#444" /><path d="M7 17l2.500-7 5 5z" fill="#f0f0f0" /><circle cx="12" cy="12" r="3" fill="#f0f0f0" /><path d="M17 7l-5.500 2.500 3 3z" fill="#e04a4a" /></Glyph></SideButton>
              <SideButton aria-label="Functions"><Glyph viewBox="0 0 24 24">{lines('M12 3.500c-3-1-4 1-4 3.500v12M4.500 9.500h7', '#222', 2)}{lines('M14.500 14l6 6M20.500 14l-6 6', '#222', 2)}</Glyph></SideButton>
              <SideHandle aria-label="Hide sidebar" />
            </SideBar>
          </Work>
          <StatusBar>
            <Stat $w={234}>Sheet 1 of 1</Stat>
            <Stat $w={319}>Selected: 1 row, 6 columns</Stat>
            <Stat $w={273}>PageStyle_Sheet1</Stat>
            <Stat $w={273} $center>English (Hong Kong)</Stat>
            <Stat $w={69} />
            <IconStat $w={29}><Glyph $s={18} viewBox="0 0 18 18">{lines('M.5 5.500h8v7h-8z', C.accent, 1.4)}{lines('M12 4.500h5M12 13.500h5M14.500 4.500v9', '#333', 1.3)}</Glyph></IconStat>
            <IconStat $w={29}><Glyph $s={14} viewBox="0 0 14 14"><path d="M5 1h3v6h3l-4.500 6L2 7h3z" fill="#a3d636" stroke="#444" /><circle cx="12" cy="2.500" r="1.500" fill="#d4113a" /></Glyph></IconStat>
            <Stat $w={29} />
            <Stat $center>Average: ; Sum: 0</Stat>
            <Zoom>
              <ZoomButton aria-label="Zoom out"><Glyph $s={8} viewBox="0 0 8 8">{lines('M0 4h8', '#555', 2)}</Glyph></ZoomButton>
              <Slider type="range" aria-label="Zoom" defaultValue={50} />
              <ZoomButton aria-label="Zoom in"><Glyph $s={8} viewBox="0 0 8 8">{lines('M0 4h8M4 0v8', '#555', 2)}</Glyph></ZoomButton>
            </Zoom>
            <Percent>100%</Percent>
          </StatusBar>
        </Win>
      </Body>
    </Page>
  );
}
